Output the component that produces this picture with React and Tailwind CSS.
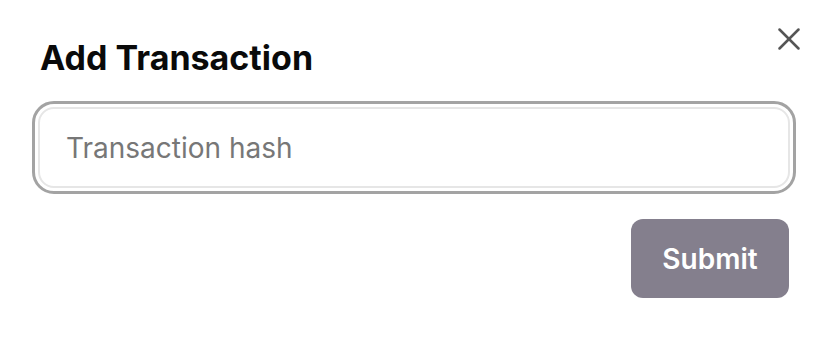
import { X } from "lucide-react";

export default function App() {
  return (
    <div className="w-[826px] h-[340px] bg-white font-['Inter','Noto_Sans',sans-serif]">
      <div className="relative pl-[38px] pr-[36px] pt-[35px]">
        <button className="absolute top-[20px] right-[18px] text-[#555]">
          <X size={38} strokeWidth={1.6} />
        </button>
        <h2 className="text-[34px] leading-[46px] font-bold text-[#0a0a0a] pl-[2px]">
          Add Transaction
        </h2>
        <div className="mt-[26px]">
          <input
            type="text"
            placeholder="Transaction hash"
            className="w-full h-[81px] px-[26px] text-[28px] text-[#333] placeholder:text-[#777] border-2 border-[#e6e6e6] rounded-[16px] outline-[3px] outline-solid outline-[#a3a3a3] outline-offset-[3px]"
          />
        </div>
        <div className="flex justify-end mt-[31px]">
          <button className="mr-[1px] w-[158px] h-[79px] rounded-[12px] bg-[#847f8d] text-white text-[28px] font-semibold">
            Submit
          </button>
        </div>
      </div>
    </div>
  );
}
